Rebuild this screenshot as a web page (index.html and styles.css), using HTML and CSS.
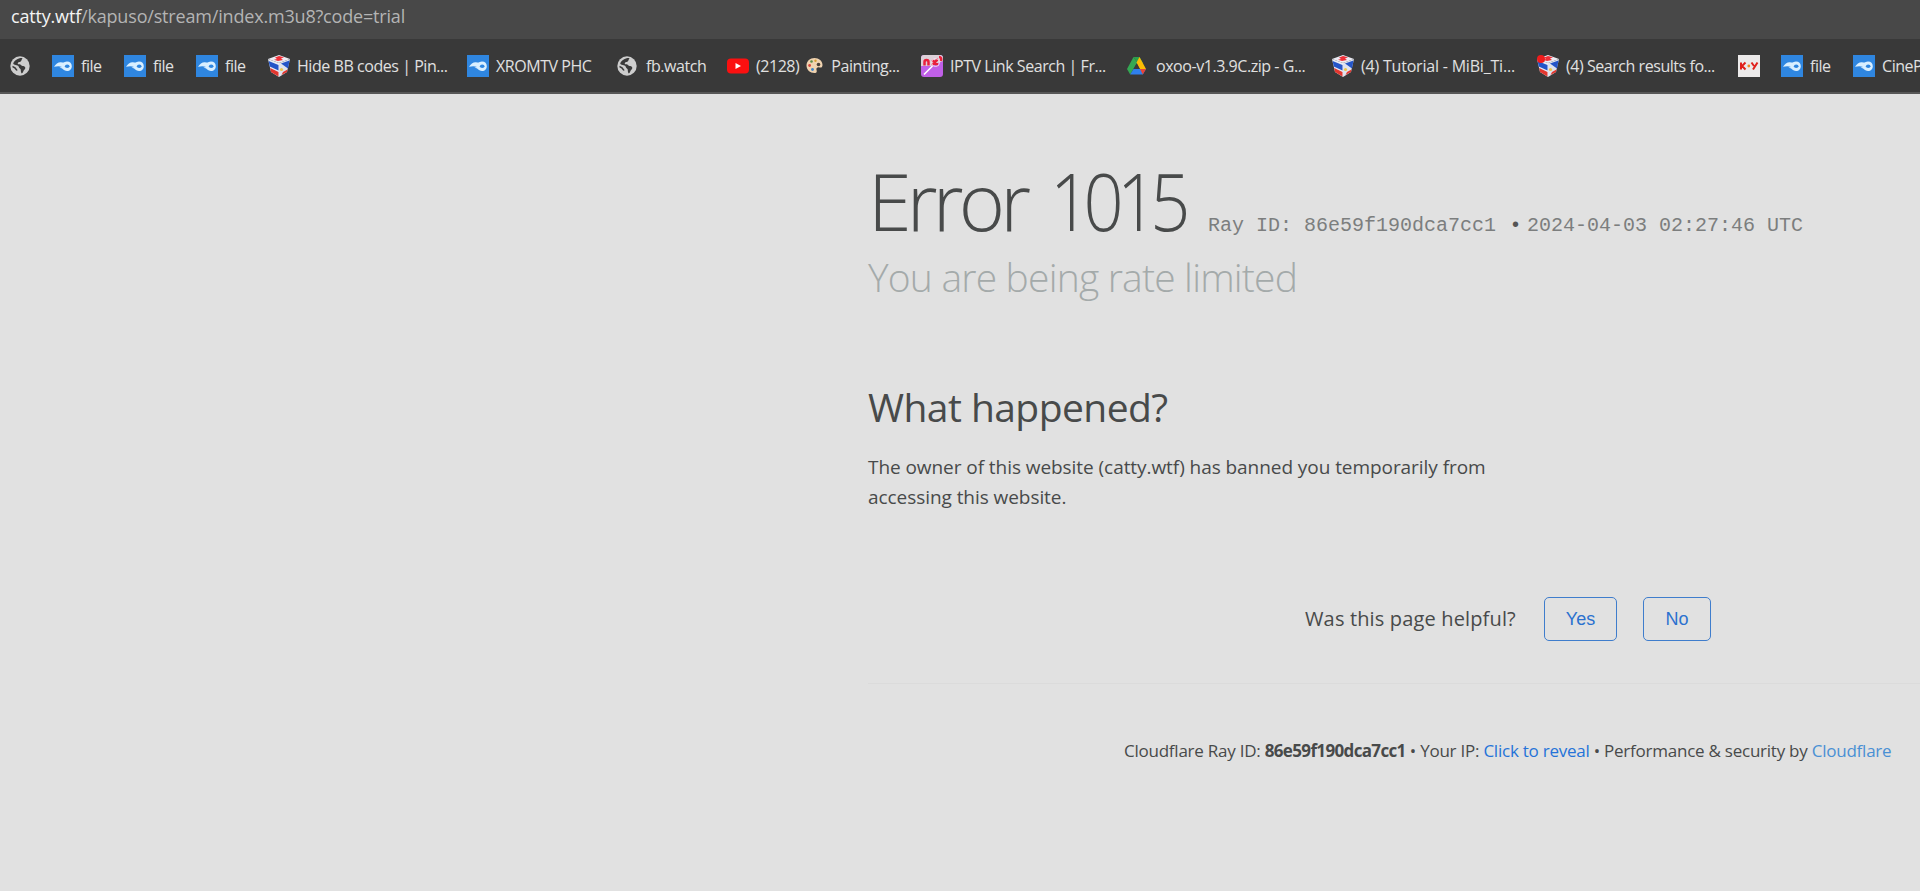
FILE: index.html
```html
<!DOCTYPE html>
<html lang="en">
<head>
    <meta charset="UTF-8">
    <meta name="viewport" content="width=device-width, initial-scale=1.0">
    <title>Access denied | catty.wtf used Cloudflare to restrict access</title>
    <link rel="stylesheet" href="styles.css">
</head>
<body>
    <!-- Shared favicons -->
    <svg class="sprites" aria-hidden="true">
        <symbol id="globe" viewBox="0 0 22 22">
            <circle cx="10" cy="11" r="9.7" fill="#cdcdcd"/>
            <path d="M12.500 3C9 2.500 4 5 3.200 8.800c2 2.200 5.300.9 5.600 3.200.2 1.500 2 1.200 2 3 0 1.500.2 2.800 1 3.500 2-1.500 1.200-3 3-4.300 1.200-1 .3-2.900-1.400-3.100-2.500-.2-2.200-1.900-4.400-1.900-2.200 0-1.200-2.300.7-2.300 1.800 0 1.500-1.800 2.800-3.900z" fill="#3a3a3a"/>
            <path d="M2.500 11.500c1.500.3 3.200 1.500 4.500 4" fill="none" stroke="#3a3a3a" stroke-width="1.600"/>
        </symbol>
        <symbol id="mediafire" viewBox="0 0 22 22">
            <rect width="22" height="22" fill="#2f86e0"/>
            <path d="M2 11.800C4 8.500 7 6.600 10 7.500c1.800.4 3-1 5-1 3 0 4.800 2.100 4.800 4.700S18 16 15 16c-3.200 0-4.200-3-7.500-3.200 1-.6 1.800-.8 2.500-.8-2.500-1-5-.8-8-.2z" fill="#d9efff"/>
            <ellipse cx="15.200" cy="11.200" rx="2.300" ry="1.700" fill="#2f86e0"/>
        </symbol>
        <symbol id="cube" viewBox="0 0 22 22">
            <path d="M11 0 22 4 11 8 0 4z" fill="#ececf4"/>
            <path d="M0 4l11 4v14L3 17z" fill="#e8ebf4"/>
            <path d="M22 4 11 8v14l8-5z" fill="#dfe3ee"/>
            <path d="M.6 6l9.900 4v5.500L1.800 11.500z" fill="#2455c8"/>
            <path d="M21.500 5.500 13 8.500l7 5z" fill="#2455c8"/>
            <path d="M2.200 13l8.300 4v4.500L3 17z" fill="#e2362e"/>
            <path d="M19.500 14.500 15 17l-1.500 3 5.500-3z" fill="#e2362e"/>
            <path d="M7 2.500 11 1l5 1.300-3 1.200 2 1.500-5 1-4-1.300 3-.8z" fill="#ef3038"/>
            <circle cx="13.500" cy="14.500" r="1.600" fill="#edc54b"/>
        </symbol>
    </svg>

    <div class="address-bar"><span class="host">catty.wtf</span>/kapuso/stream/index.m3u8?code=trial</div>

    <nav class="bookmarks">
        <a class="bookmark"><svg class="favicon"><use href="#globe"/></svg></a>
        <a class="bookmark"><svg class="favicon"><use href="#mediafire"/></svg>file</a>
        <a class="bookmark"><svg class="favicon"><use href="#mediafire"/></svg>file</a>
        <a class="bookmark"><svg class="favicon"><use href="#mediafire"/></svg>file</a>
        <a class="bookmark"><svg class="favicon"><use href="#cube"/></svg>Hide BB codes | Pin...</a>
        <a class="bookmark"><svg class="favicon"><use href="#mediafire"/></svg>XROMTV PHC</a>
        <a class="bookmark"><svg class="favicon"><use href="#globe"/></svg>fb.watch</a>
        <a class="bookmark">
            <svg class="favicon" viewBox="0 0 22 22">
                <rect y="3.500" width="22" height="15" rx="4" fill="#fb1010"/>
                <path d="M8.500 8v6l5.500-3z" fill="#fff"/>
            </svg>(2128)
            <svg class="palette" viewBox="0 0 17 17">
                <path d="M8.500 1C4 1 .5 4 .5 8.500S4 16 8.500 16c2.500 0 2.500-1.500 2-3-.5-2 1-3 3-2.500 2 .4 3-.5 3-2.500C16.500 4 13 1 8.500 1z" fill="#f0d3b0"/>
                <circle cx="5.500" cy="4.500" r="1.300" fill="#5b8c4a"/>
                <circle cx="9.500" cy="3.800" r="1.200" fill="#d8a034"/>
                <circle cx="12.500" cy="7.500" r="1.800" fill="#4a4038"/>
                <circle cx="3.600" cy="8.500" r="1.400" fill="#d5473c"/>
                <circle cx="6.500" cy="12.500" r="1.400" fill="#3f86c9"/>
            </svg>
            Painting...</a>
        <a class="bookmark">
            <svg class="favicon" viewBox="0 0 22 22">
                <rect width="22" height="22" rx="3" fill="#c060e8"/>
                <path d="M0 11V3a3 3 0 0 1 3-3h16a3 3 0 0 1 3 3v3L10 11z" fill="#ddd0d8"/>
                <path d="M3.500 10.500V7q0-2 2-2t2 2v3.500M11 5l6 5M17 4l-6 6M18 2q3 0 2 4" fill="none" stroke="#e9203c" stroke-width="2.500"/>
                <circle cx="14.500" cy="7.500" r="4" fill="none" stroke="#f6dfee"/>
                <path d="M3 19.500 11.500 11" stroke="#fff" stroke-width="1.600"/>
            </svg>IPTV Link Search | Fr...</a>
        <a class="bookmark">
            <svg class="favicon" viewBox="0 0 22 22">
                <path d="M6.500 2 0 14l3.200 5.500L10.300 7.500z" fill="#34a853"/>
                <path d="M6.500 2h6L16 8l-3.500 3L10 7.500z" fill="#2c9f4b"/>
                <path d="M12.500 2 19 14h-6L9.500 7.500z" fill="#fbbc04"/>
                <path d="M3.200 19.500 6.500 14H19l-3.200 5.500z" fill="#2f80ed"/>
                <path d="M15.800 19.500 13 14h6z" fill="#ea4335"/>
                <path d="M9.500 8.500 6.500 14h6z" fill="#3a3a3a"/>
            </svg>oxoo-v1.3.9C.zip - G...</a>
        <a class="bookmark wide"><svg class="favicon"><use href="#cube"/></svg>(4) Tutorial - MiBi_Ti...</a>
        <a class="bookmark">
            <svg class="favicon" viewBox="0 0 22 22">
                <use href="#cube"/>
                <circle cx="4" cy="4" r="4" fill="#f01c1c"/>
            </svg>(4) Search results fo...</a>
        <a class="bookmark">
            <svg class="favicon" viewBox="0 0 22 22">
                <rect width="22" height="22" fill="#eceaea"/>
                <path d="M3 7.500v7M7.500 7.500 4 11l3.500 3.500M13.500 7.500l2.500 3.500M19.500 7.500 15 14.500" fill="none" stroke="#e0201c" stroke-width="2"/>
                <circle cx="10.800" cy="11" r="1.400" fill="#ef8a25"/>
            </svg></a>
        <a class="bookmark"><svg class="favicon"><use href="#mediafire"/></svg>file</a>
        <a class="bookmark"><svg class="favicon"><use href="#mediafire"/></svg>CineP</a>
    </nav>

    <main class="error-page">
        <header class="error-header">
            <h1>Error <span class="code">1015</span></h1>
            <p class="ray-id">Ray ID: 86e59f190dca7cc1 <span class="bullet">&bull;</span>2024-04-03 02:27:46 UTC</p>
        </header>
        <h2 class="subtitle">You are being rate limited</h2>

        <section class="what-happened">
            <h2>What happened?</h2>
            <p>The owner of this website (catty.wtf) has banned you temporarily from accessing this website.</p>
        </section>

        <div class="feedback">
            <span class="question">Was this page helpful?</span>
            <button class="button yes" type="button">Yes</button>
            <button class="button no" type="button">No</button>
        </div>

        <footer class="error-footer">
            Cloudflare Ray ID: <strong>86e59f190dca7cc1</strong> &bull; Your IP: <a class="reveal">Click to reveal</a> &bull; Performance &amp; security by <a class="brand">Cloudflare</a>
        </footer>
    </main>
</body>
</html>
```
FILE: styles.css
```css
* {
    box-sizing: border-box;
}
body {
    font-family: 'Open Sans', 'Noto Sans', sans-serif;
    color: #484a4a;
    margin: 0;
    height: 100vh;
    overflow: hidden;
    background-color: #e1e1e1;
}
h1, h2, p {
    margin: 0;
    font-weight: 400;
}
.sprites {
    display: none;
}

/* Browser chrome */
.address-bar {
    height: 39px;
    padding-left: 11px;
    background-color: #484848;
    color: #b4b4b4;
    font-size: 18px;
    line-height: 33px;
    letter-spacing: -0.18px;
}
.address-bar .host {
    color: #f4f4f4;
}
.bookmarks {
    display: grid;
    grid-template-columns: 42px 72px 72px 72px 199px 150px 110px 194px 206px 205px 205px 201px 43px 72px 120px;
    height: 55px;
    padding: 0 0 0 10px;
    background-color: #393939;
    border-bottom: 2px solid #575757;
}
.bookmark {
    display: flex;
    align-items: center;
    color: #e0e0e0;
    font-size: 16px;
    letter-spacing: -0.45px;
    white-space: nowrap;
}
.bookmark.wide {
    letter-spacing: -0.2px;
}
.favicon {
    flex: none;
    width: 22px;
    height: 22px;
    margin-right: 7px;
}
.palette {
    width: 17px;
    height: 17px;
    margin: 0 8px 0 7px;
}

/* Error page */
.error-page {
    padding: 67px 0 0 868px;
}
.error-header {
    display: flex;
    align-items: baseline;
}
h1 {
    width: 340px;
    font-size: 79px;
    font-weight: 300;
    line-height: 80px;
    letter-spacing: -4.8px;
    white-space: nowrap;
}
.code {
    display: inline-block;
    margin-left: 8px;
    letter-spacing: -7.5px;
    transform: scaleX(0.89);
    transform-origin: left;
}
.ray-id {
    color: #7c7e7e;
    font-family: 'Liberation Mono', monospace;
    font-size: 20px;
    white-space: nowrap;
}
.bullet {
    display: inline-block;
    width: 19px;
    padding-right: 4px;
    color: #555;
    text-align: center;
}
.subtitle {
    margin-top: 11px;
    color: #a4aaaa;
    font-size: 39px;
    font-weight: 300;
    line-height: 50px;
    letter-spacing: -0.8px;
}
.what-happened {
    width: 640px;
    margin-top: 80px;
}
.what-happened h2 {
    font-size: 39px;
    line-height: 50px;
    letter-spacing: -0.55px;
}
.what-happened p {
    margin-top: 20px;
    font-size: 19px;
    line-height: 30px;
    letter-spacing: -0.06px;
}
.feedback {
    display: flex;
    align-items: center;
    height: 44px;
    margin-top: 85px;
    padding-left: 437px;
}
.question {
    width: 239px;
    padding-bottom: 1px;
    font-size: 20px;
    letter-spacing: 0.15px;
    white-space: nowrap;
}
.button {
    height: 44px;
    padding: 0;
    border: 1px solid #3f7dcc;
    border-radius: 5px;
    background: none;
    color: #2b71cf;
    font-family: 'Liberation Sans', Arial, sans-serif;
    font-size: 18px;
}
.yes {
    width: 73px;
    margin-right: 26px;
}
.no {
    width: 68px;
}
.error-footer {
    margin-top: 42px;
    padding: 54px 0 0 256px;
    border-top: 1px solid #dbdbdb;
    font-size: 17px;
    line-height: 26px;
    letter-spacing: -0.24px;
    white-space: nowrap;
}
.error-footer strong {
    letter-spacing: -0.65px;
}
.reveal {
    color: #2573d8;
}
.brand {
    color: #4a90d4;
}
```
